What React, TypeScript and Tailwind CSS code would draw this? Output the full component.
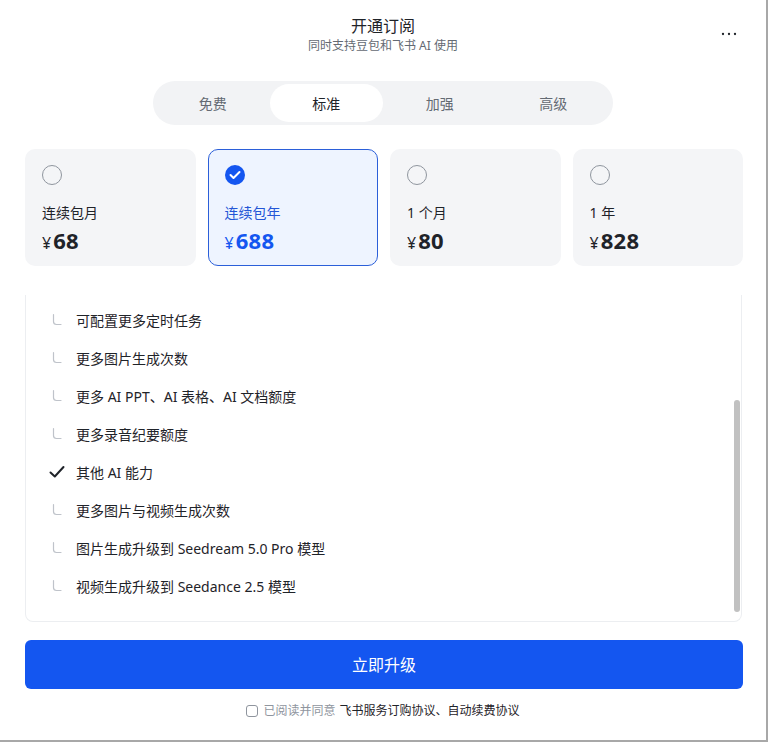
import React from "react";

const font = { fontFamily: '"Noto Sans", "Noto Sans CJK SC", sans-serif' };

function Hook() {
  return (
    <svg width="12" height="14" viewBox="0 0 12 14" fill="none">
      <path d="M2.5 1.5 V8.5 Q2.5 11.5 5.5 11.5 H10" stroke="#bfc3ca" strokeWidth="1.2" strokeLinecap="round" />
    </svg>
  );
}

function Check() {
  return (
    <svg width="16" height="14" viewBox="0 0 16 14" fill="none">
      <path d="M1.5 7.5 L5.8 11.5 L14.5 2" stroke="#1f2329" strokeWidth="2" strokeLinecap="round" strokeLinejoin="round" />
    </svg>
  );
}

const plans = [
  { label: "连续包月", price: "68", selected: false },
  { label: "连续包年", price: "688", selected: true },
  { label: "1 个月", price: "80", selected: false },
  { label: "1 年", price: "828", selected: false },
];

const features: { text: string; check?: boolean }[] = [
  { text: "可配置更多定时任务" },
  { text: "更多图片生成次数" },
  { text: "更多 AI PPT、AI 表格、AI 文档额度" },
  { text: "更多录音纪要额度" },
  { text: "其他 AI 能力", check: true },
  { text: "更多图片与视频生成次数" },
  { text: "图片生成升级到 Seedream 5.0 Pro 模型" },
  { text: "视频生成升级到 Seedance 2.5 模型" },
];

export default function App() {
  return (
    <div
      style={font}
      className="relative w-[768px] h-[742px] bg-white border-r-2 border-b-2 border-[#a8a8a8] flex flex-col overflow-hidden"
    >
      <div className="relative flex flex-col items-center pt-[14px]">
        <div className="text-[16px] leading-[24px] text-[#1f2329]">开通订阅</div>
        <div className="text-[12px] leading-[16px] text-[#646a73]">同时支持豆包和飞书 AI 使用</div>
        <div className="absolute right-[29px] top-[31px]">
          <svg width="16" height="6" viewBox="0 0 16 6">
            <circle cx="2" cy="3" r="1.15" fill="#1f2329" />
            <circle cx="8" cy="3" r="1.15" fill="#1f2329" />
            <circle cx="14" cy="3" r="1.15" fill="#1f2329" />
          </svg>
        </div>
      </div>

      <div className="mt-[27px] flex justify-center">
        <div className="w-[460px] h-[44px] rounded-full bg-[#f2f3f5] p-[3px] grid grid-cols-4">
          {["免费", "标准", "加强", "高级"].map((t) => (
            <div
              key={t}
              className={
                t === "标准"
                  ? "rounded-full bg-white flex items-center justify-center text-[14px] text-[#1f2329]"
                  : "rounded-full flex items-center justify-center text-[14px] text-[#646a73]"
              }
            >
              {t}
            </div>
          ))}
        </div>
      </div>

      <div className="mt-[24px] pl-[25px] pr-[23px] grid grid-cols-4 gap-[12px]">
        {plans.map((p) => (
          <div
            key={p.label}
            className={
              p.selected
                ? "h-[117px] rounded-[10px] border border-[#2b5fd9] bg-[#eef4ff] pl-[16px] pt-[15px] flex flex-col"
                : "h-[117px] rounded-[10px] border border-transparent bg-[#f4f5f7] pl-[16px] pt-[15px] flex flex-col"
            }
          >
            {p.selected ? (
              <div className="w-[20px] h-[20px] rounded-full bg-[#1456f0] flex items-center justify-center">
                <svg width="12" height="10" viewBox="0 0 12 10" fill="none">
                  <path d="M1.5 5 L4.5 8 L10.5 2" stroke="white" strokeWidth="2" strokeLinecap="round" strokeLinejoin="round" />
                </svg>
              </div>
            ) : (
              <div className="w-[20px] h-[20px] rounded-full border border-[#8f959e] bg-transparent" />
            )}
            <div
              className={
                p.selected
                  ? "mt-[17px] text-[14px] leading-[22px] text-[#2456d6]"
                  : "mt-[17px] text-[14px] leading-[22px] text-[#1f2329]"
              }
            >
              {p.label}
            </div>
            <div
              className={
                p.selected
                  ? "mt-[2px] flex items-baseline text-[#1456f0]"
                  : "mt-[2px] flex items-baseline text-[#1f2329]"
              }
            >
              <span className="text-[16px] leading-[28px] mr-[2px]">¥</span>
              <span className="text-[22px] leading-[28px] font-bold tracking-[0.3px]">{p.price}</span>
            </div>
          </div>
        ))}
      </div>

      <div className="relative mt-[29px] ml-[25px] mr-[24px] h-[327px] border-l border-r border-b border-[#eceef1] rounded-b-[8px] pt-[6px]">
        {features.map((f) => (
          <div key={f.text} className="h-[38px] flex items-center pl-[22px]">
            <div className="w-[18px] flex items-center justify-center">{f.check ? <Check /> : <Hook />}</div>
            <div className="ml-[10px] text-[14px] text-[#1f2329]">{f.text}</div>
          </div>
        ))}
        <div className="absolute right-[1px] top-[105px] w-[6px] h-[212px] rounded-full bg-[#c1c1c1]" />
      </div>

      <div className="mt-[18px] ml-[25px] mr-[23px] h-[49px] rounded-[6px] bg-[#1456f0] flex items-center justify-center text-white text-[16px]">
        立即升级
      </div>

      <div className="mt-[12px] flex items-center justify-center text-[12px] leading-[20px]">
        <div className="w-[12px] h-[12px] rounded-[3px] border border-[#8f959e] mr-[5px]" />
        <span className="text-[#8f959e]">已阅读并同意</span>
        <span className="ml-[4px] text-[#1f2329]">飞书服务订购协议、自动续费协议</span>
      </div>
    </div>
  );
}
